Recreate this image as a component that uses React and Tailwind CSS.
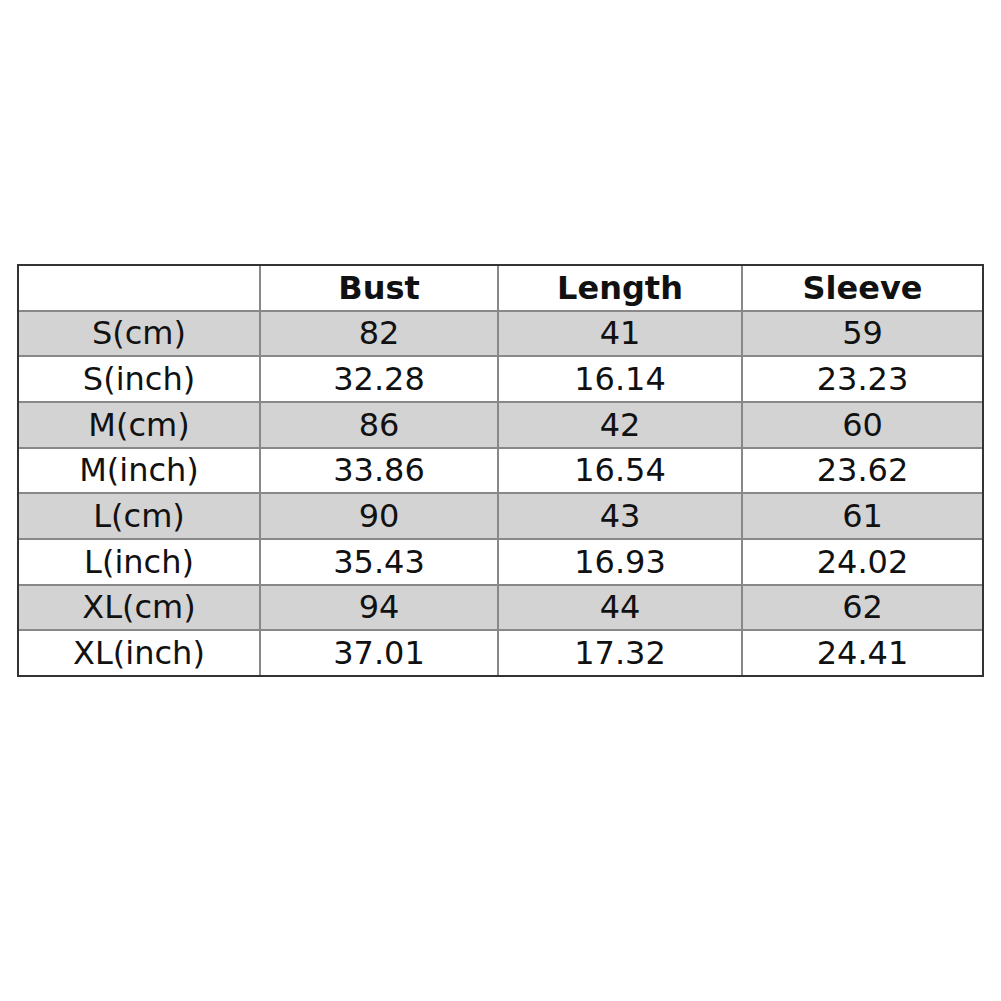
const rows = [
  ["S(cm)", "82", "41", "59"],
  ["S(inch)", "32.28", "16.14", "23.23"],
  ["M(cm)", "86", "42", "60"],
  ["M(inch)", "33.86", "16.54", "23.62"],
  ["L(cm)", "90", "43", "61"],
  ["L(inch)", "35.43", "16.93", "24.02"],
  ["XL(cm)", "94", "44", "62"],
  ["XL(inch)", "37.01", "17.32", "24.41"],
];

const App = () => {
  return (
    <div className="w-[1001px] h-[1001px] bg-white pt-[264px] px-[17px]" style={{ fontFamily: '"DejaVu Sans", sans-serif' }}>
      <div className="w-[967px] h-[413px] border-2 border-[#333] bg-[#888] grid gap-[2px] grid-cols-[240px_236px_242px_1fr] grid-rows-9 text-[32px] text-[#111]">
        <div className="bg-white"></div>
        <div className="bg-white flex items-center justify-center font-bold leading-none">Bust</div>
        <div className="bg-white flex items-center justify-center font-bold leading-none">Length</div>
        <div className="bg-white flex items-center justify-center font-bold leading-none">Sleeve</div>
        {rows.map((r, i) =>
          r.map((c, j) => (
            <div
              key={i + "-" + j}
              className={(i % 2 === 0 ? "bg-[#d3d3d3]" : "bg-white") + " flex items-center justify-center leading-none"}
            >
              {c}
            </div>
          ))
        )}
      </div>
    </div>
  );
};

export default App;
